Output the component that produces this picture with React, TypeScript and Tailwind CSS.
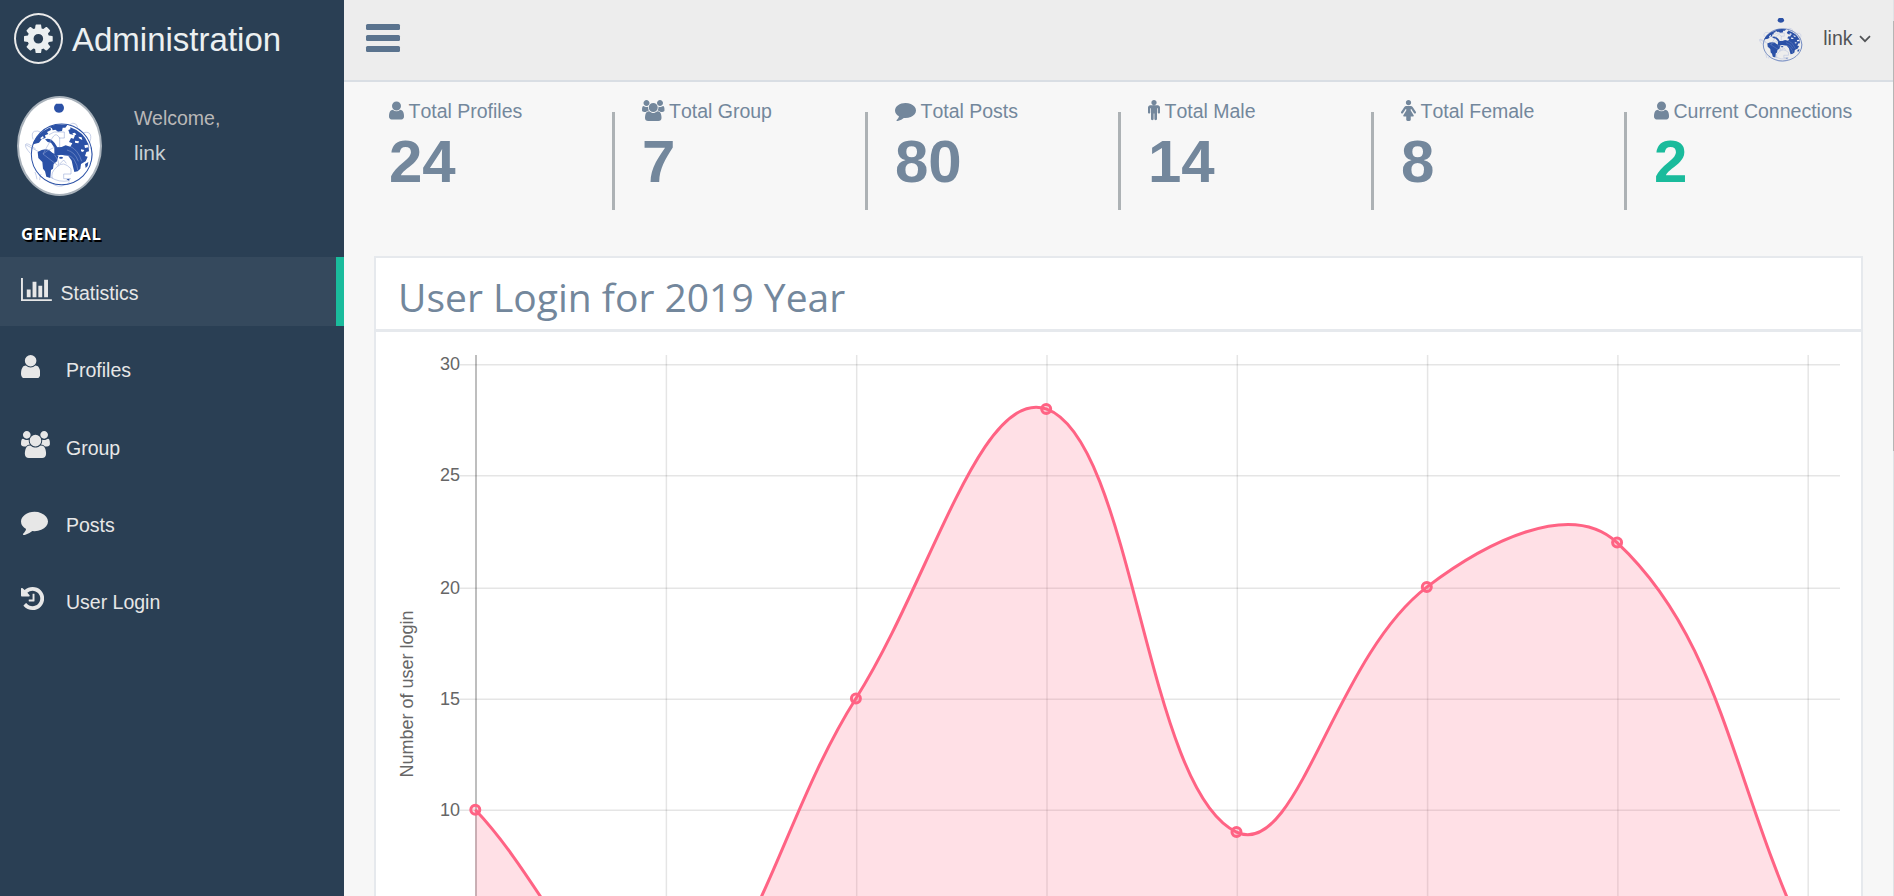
import type { ReactNode } from "react";

type IconDef = { box: [number, number]; d: string };

const ICONS = {
  user: {
    box: [0, 1280],
    d: "M1280 1399q0 109-62.5 187t-150.5 78h-854q-88 0-150.5-78t-62.5-187q0-85 8.5-160.5t31.5-152 58.5-131 94-89 134.5-34.5q131 128 313 128t313-128q76 0 134.5 34.5t94 89 58.5 131 31.5 152 8.5 160.5zm-256-887q0 159-112.5 271.5t-271.5 112.5-271.5-112.5-112.5-271.5 112.5-271.5 271.5-112.5 271.5 112.5 112.5 271.5z",
  },
  users: {
    box: [0, 1920],
    d: "M593 896q-162 5-265 128h-134q-82 0-138-40.5t-56-118.5q0-353 124-353 6 0 43.5 21t97.5 42.5 119 21.5q67 0 133-23-5 37-5 66 0 139 81 256zm1071 637q0 120-73 189.5t-194 69.5h-874q-121 0-194-69.5t-73-189.5q0-53 3.5-103.5t14-109 26.5-108.5 43-97.5 62-81 85.5-53.5 111.5-20q10 0 43 21.5t73 48 107 48 135 21.5 135-21.5 107-48 73-48 43-21.5q61 0 111.5 20t85.5 53.5 62 81 43 97.5 26.5 108.5 14 109 3.5 103.5zm-1024-1277q0 106-75 181t-181 75-181-75-75-181 75-181 181-75 181 75 75 181zm704 384q0 159-112.5 271.5t-271.5 112.5-271.5-112.5-112.5-271.5 112.5-271.5 271.5-112.5 271.5 112.5 112.5 271.5zm576 225q0 78-56 118.5t-138 40.5h-134q-103-123-265-128 81-117 81-256 0-29-5-66 66 23 133 23 59 0 119-21.5t97.5-42.5 43.5-21q124 0 124 353zm-128-609q0 106-75 181t-181 75-181-75-75-181 75-181 181-75 181 75 75 181z",
  },
  comment: {
    box: [0, 1792],
    d: "M1792 896q0 174-120 321.5t-326 233-450 85.5q-70 0-145-8-198 175-460 242-49 14-114 22-17 2-30.5-9t-17.5-29v-1q-3-4-.5-12t2-10 4.5-9.5l6-9 7-8.5 8-9q7-8 31-34.5t34.5-38 31-39.5 32.5-51 27-59 26-76q-157-89-247.5-220t-90.5-281q0-130 71-248.5t191-204.5 286-136.5 348-50.5q244 0 450 85.5t326 233 120 321.5z",
  },
  history: {
    box: [128, 1536],
    d: "M1664 896q0 156-61 298t-164 245-245 164-298 61q-172 0-327-72.5t-264-204.5q-7-10-6.5-22.5t8.5-20.5l137-138q10-9 25-9 16 2 23 12 73 95 179 147t225 52q104 0 198.5-40.5t163.5-109.5 109.5-163.5 40.5-198.5-40.5-198.5-109.5-163.5-163.5-109.5-198.5-40.5q-98 0-188 35.5t-160 101.5l137 138q31 30 14 69-17 40-59 40h-448q-26 0-45-19t-19-45v-448q0-42 40-59 39-17 69 14l130 129q107-101 244.5-156.5t284.5-55.5q156 0 298 61t245 164 164 245 61 298zm-640-288v448q0 14-9 23t-23 9h-320q-14 0-23-9t-9-23v-64q0-14 9-23t23-9h224v-352q0-14 9-23t23-9h64q14 0 23 9t9 23z",
  },
  barChart: {
    box: [0, 2048],
    d: "M640 896v512h-256v-512h256zm384-512v1024h-256v-1024h256zm1024 1152v128h-2048v-1536h128v1408h1920zm-640-896v768h-256v-768h256zm384-384v1152h-256v-1152h256z",
  },
  male: {
    box: [384, 1024],
    d: "M1408 640v416q0 40-28 68t-68 28-68-28-28-68v-352h-64v912q0 46-33 79t-79 33-79-33-33-79v-464h-64v464q0 46-33 79t-79 33-79-33-33-79v-912h-64v352q0 40-28 68t-68 28-68-28-28-68v-416q0-80 56-136t136-56h640q80 0 136 56t56 136zm-288-416q0 93-65.5 158.5t-158.5 65.5-158.5-65.5-65.5-158.5 65.5-158.5 158.5-65.5 158.5 65.5 65.5 158.5z",
  },
  female: {
    box: [256, 1280],
    d: "M1536 1056q0 40-28 68t-68 28q-51 0-80-43l-227-341h-45v132l247 411q9 15 9 33 0 26-19 45t-45 19h-192v272q0 46-33 79t-79 33h-160q-46 0-79-33t-33-79v-272h-192q-26 0-45-19t-19-45q0-18 9-33l247-411v-132h-45l-227 341q-29 43-80 43-40 0-68-28t-28-68q0-29 16-53l256-384q73-107 176-107h384q103 0 176 107l256 384q16 24 16 53zm-416-832q0 93-65.5 158.5t-158.5 65.5-158.5-65.5-65.5-158.5 65.5-158.5 158.5-65.5 158.5 65.5 65.5 158.5z",
  },
  cog: {
    box: [128, 1536],
    d: "M1152 896q0-106-75-181t-181-75-181 75-75 181 75 181 181 75 181-75 75-181zm512-109v222q0 12-8 23t-20 13l-185 28q-19 54-39 91 35 50 107 138 10 12 10 25t-9 23q-27 37-99 108t-94 71q-12 0-26-9l-138-108q-44 23-91 38-16 136-29 186-7 28-36 28h-222q-14 0-24.5-8.5t-11.5-21.5l-28-184q-49-16-90-37l-141 107q-10 9-25 9-14 0-25-11-126-114-165-168-7-10-7-23 0-12 8-23 15-21 51-66.5t54-70.5q-27-50-41-99l-183-27q-13-2-21-12.5t-8-23.5v-222q0-12 8-23t19-13l186-28q14-46 39-92-40-57-107-138-10-12-10-24 0-10 9-23 26-36 98.5-107.5t94.5-71.5q13 0 26 10l138 107q44-23 91-38 16-136 29-186 7-28 36-28h222q14 0 24.5 8.5t11.5 21.5l28 184q49 16 90 37l142-107q9-9 24-9 13 0 25 10 129 119 165 170 7 8 7 22 0 12-8 23-15 21-51 66.5t-54 70.5q26 50 41 98l183 28q13 2 21 12.5t8 23.5z",
  },
} satisfies Record<string, IconDef>;

type IconName = keyof typeof ICONS;

function Icon({ name, className }: { name: IconName; className: string }) {
  const { box, d } = ICONS[name];
  return (
    <svg viewBox={`${box[0]} 0 ${box[1]} 1792`} className={`w-auto shrink-0 fill-current ${className}`}>
      <path d={d} />
    </svg>
  );
}

function Globe({ className }: { className: string }) {
  return (
    <svg viewBox="40 30 222 260" preserveAspectRatio="none" className={className}>
      <path d="M139 41h18q6 6 6 13t-6 12q-9 5-18 0-6-5-6-12t6-13z" fill="#2b51a6" />
      <g fill="none" stroke="#a9b7dc" strokeWidth="2">
        <path d="M70 148q-6-20 4-24t22 4M180 104q10-8 18-2t4 16M222 128q16-4 20 6t-4 26M62 190q-18-20-14-27t30 14M76 246q4 10 6 22M94 252q-4 10-4 18M120 274q18 18 36 14t24-12" />
        <path d="M48 164l52 28M240 170q14 20 4 46" />
      </g>
      <circle cx="156" cy="193" r="91" fill="none" stroke="#2b51a6" strokeWidth="3" />
      <g fill="#2b51a6">
        <path d="M68 164q10-26 34-42l20-10 2 8-12 6 4 6-10 4 2 8-12 4-8 10-14 4z" />
        <path d="M119 110q22-10 54-5l-6 8-8 0-2 10-12 2-8-6-8 2-2-6z" />
        <path d="M182 112q40 14 54 50l2 22-8 2-4 12 8 2-6 14-14 8-2 14-8 8-10 2-4-16-4-18-10-14-22-4-20 4v-24l20-2 14-6 14 4 6-10-10-4 6-12 8 2 4-10-16-4-4-12 6-2z" />
        <path d="M84 186q18-12 34-6l10 8 18 10-4 16-10 8-2 14-6 4-2 24-12-4-4-16-6-8-2-20-12-12z" />
        <path d="M106 148q20-8 36 22l4 8-10-2-12-18-10-2zM136 172h36v22h-36z" />
        <path d="M148 202q6-4 12 0l-2 4h-8zM226 222l10-6-2 12-6 6zM170 268l10-2-2 6z" />
      </g>
      <g fill="#ffffff">
        <path d="M188 130l8-2 4 6-8 2zM206 140l10 2 2 8-8-4zM196 152l12 2-2 6-10-2zM224 166l10-2 2 8-10 2zM214 178l10 2-4 6-6-2zM92 144l8-6 2 6-8 4z" />
      </g>
      <g fill="none" stroke="#8fa3d4" strokeWidth="1.6">
        <path d="M100 192q24-44 32-54t18 6v28M134 172q-24 10-34 20l44 34M134 194q16 20 12 32M148 126h16v18h-16M118 134q16-12 30-8M164 196q20-2 30 14t10 30M172 180q24 6 34 34M180 168q26 12 36 46M140 232q12-12 22-10t22 14v16h-22v14h22M140 232q-18 16-12 34M150 222l12-12 8 10M124 262q22 16 56 10" />
      </g>
    </svg>
  );
}

const NAV: { icon: IconName; label: string; active?: boolean }[] = [
  { icon: "barChart", label: "Statistics", active: true },
  { icon: "user", label: "Profiles" },
  { icon: "users", label: "Group" },
  { icon: "comment", label: "Posts" },
  { icon: "history", label: "User Login" },
];

function Sidebar() {
  return (
    <aside className="flex w-[344px] shrink-0 flex-col bg-[#2a3f54]">
      <div className="flex h-[82px] items-start pl-3.5 pt-[13px] text-[#ecf0f1]">
        <span className="flex h-[51px] w-[49px] items-center justify-center rounded-[50%] border-2 border-[#eaeaea]">
          <Icon name="cog" className="h-[33.5px]" />
        </span>
        <span className="ml-[9px] mt-2 text-[33px] leading-[38px]">Administration</span>
      </div>
      <div className="flex pl-[17px] pt-3.5">
        <div className="h-[100px] w-[85px] rounded-[50%] border-2 border-[#a9b2bb] bg-white pb-[7.3px] pl-[4.3px] pr-[2.7px] pt-[2px]">
          <Globe className="h-full w-full" />
        </div>
        <div className="ml-8 pt-[11px]">
          <div className="text-[19.5px] leading-[23px] text-[#bab8b8]">Welcome,</div>
          <div className="mt-[11px] text-[21px] leading-6 text-[#c8d0d5]">link</div>
        </div>
      </div>
      <h3 className="mt-[26px] h-[35px] pl-[21px] font-['Open_Sans'] text-[16.5px] font-bold leading-6 tracking-[0.75px] text-white [text-shadow:1.5px_1.5px_#000]">
        GENERAL
      </h3>
      <ul>
        {NAV.map((item) => (
          <li key={item.label} className="h-[77.3px]">
            <a
              className={
                item.active
                  ? "flex h-[69px] items-start border-r-8 border-[#1abb9c] bg-[#35495d] pl-[21px] text-[#e7e7e7]"
                  : "flex h-[69px] items-start pl-[21px] text-[#e7e7e7]"
              }
            >
              <span className={item.active ? "mt-[19px] w-[39.5px]" : "mt-[19px] w-[45px]"}>
                <Icon name={item.icon} className="h-[27px]" />
              </span>
              <span className="mt-[25px] text-[19.5px] leading-[22px]">{item.label}</span>
            </a>
          </li>
        ))}
      </ul>
    </aside>
  );
}

function TopBar() {
  return (
    <header className="flex h-[82px] items-start justify-between border-b-2 border-[#d9dee4] bg-[#ededed] pl-[22px] pr-[22.5px]">
      <div className="mt-6 flex w-[34px] flex-col gap-[5px]">
        <span className="h-1.5 rounded-[1.5px] bg-[#5a738e]" />
        <span className="h-1.5 rounded-[1.5px] bg-[#5a738e]" />
        <span className="h-1.5 rounded-[1.5px] bg-[#5a738e]" />
      </div>
      <div className="flex items-start text-[#515356]">
        <Globe className="mt-4 h-[46px] w-[47px]" />
        <span className="ml-[18px] mt-[27px] text-[19.5px] leading-[22px]">link</span>
        <svg viewBox="0 0 12 8" className="ml-[6px] mt-[34.5px] h-2 w-3">
          <path d="M1 1.2L6 6.2L11 1.2" fill="none" stroke="currentColor" strokeWidth="1.7" />
        </svg>
      </div>
    </header>
  );
}

const STATS: { icon: IconName; label: string; value: string; accent?: boolean }[] = [
  { icon: "user", label: "Total Profiles", value: "24" },
  { icon: "users", label: "Total Group", value: "7" },
  { icon: "comment", label: "Total Posts", value: "80" },
  { icon: "male", label: "Total Male", value: "14" },
  { icon: "female", label: "Total Female", value: "8" },
  { icon: "user", label: "Current Connections", value: "2", accent: true },
];

function StatTiles() {
  return (
    <section className="flex h-[174px] pl-[15px] pt-[18px]">
      {STATS.map((s, i) => (
        <div key={s.label} className="flex w-[253px] items-start">
          <div className={i === 0 ? "mt-3 h-[98px] w-[3px]" : "mt-3 h-[98px] w-[3px] bg-[#adb2b5]"} />
          <div className="pl-[27px]">
            <div className="flex h-[25px] items-start whitespace-nowrap">
              <Icon name={s.icon} className="h-[21px]" />
              <span className="ml-[4.5px] text-[19.5px] leading-[22px] [font-kerning:none]">{s.label}</span>
            </div>
            <div
              className={
                s.accent
                  ? "mt-[2px] text-[60px] font-bold leading-[70px] text-[#1abb9c]"
                  : "mt-[2px] text-[60px] font-bold leading-[70px]"
              }
            >
              {s.value}
            </div>
          </div>
        </div>
      ))}
    </section>
  );
}

const LOGINS = [10, 1, 15, 28, 9, 20, 22, 4];
const X0 = 99.3;
const STEP_X = 190.3;
const Y0 = 700.5;
const UNIT_Y = 22.27;
const TENSION = 0.4;

type Pt = { x: number; y: number };
const POINTS: Pt[] = LOGINS.map((v, i) => ({ x: X0 + i * STEP_X, y: Y0 - v * UNIT_Y }));

function controls(i: number): [Pt, Pt] {
  const p = POINTS[i];
  const a = POINTS[i - 1] ?? p;
  const b = POINTS[i + 1] ?? p;
  const d0 = Math.hypot(p.x - a.x, p.y - a.y);
  const d1 = Math.hypot(b.x - p.x, b.y - p.y);
  const f0 = (TENSION * d0) / (d0 + d1);
  const f1 = (TENSION * d1) / (d0 + d1);
  return [
    { x: p.x - f0 * (b.x - a.x), y: p.y - f0 * (b.y - a.y) },
    { x: p.x + f1 * (b.x - a.x), y: p.y + f1 * (b.y - a.y) },
  ];
}

const CURVE = POINTS.map((p, i) => {
  if (i === 0) return `M${p.x} ${p.y}`;
  const c1 = controls(i - 1)[1];
  const c2 = controls(i)[0];
  return `C${c1.x} ${c1.y} ${c2.x} ${c2.y} ${p.x} ${p.y}`;
}).join("");

const TICKS = [
  { label: "30", y: 32.75 },
  { label: "25", y: 143.75 },
  { label: "20", y: 256.25 },
  { label: "15", y: 367.25 },
  { label: "10", y: 478.25 },
];

function LoginChart() {
  return (
    <svg viewBox="0 0 1485 564" className="block h-[564px] w-[1485px]">
      <g stroke="#000000" strokeOpacity="0.1" strokeWidth="1.5">
        {TICKS.map((t) => (
          <line key={t.label} x1="84" x2="1464" y1={t.y} y2={t.y} />
        ))}
        {POINTS.slice(1).map((p) => (
          <line key={p.x} x1={p.x + 0.8} x2={p.x + 0.8} y1="23" y2="564" />
        ))}
      </g>
      <line x1="100" x2="100" y1="23" y2="564" stroke="#000000" strokeOpacity="0.3" strokeWidth="1.7" />
      <path
        d={`${CURVE}L${POINTS[7].x} ${Y0}L${X0} ${Y0}Z`}
        fill="rgb(255,99,132)"
        fillOpacity="0.2"
      />
      <path d={CURVE} fill="none" stroke="rgb(255,99,132)" strokeWidth="3" />
      {POINTS.map((p) => (
        <circle
          key={p.x}
          cx={p.x}
          cy={p.y}
          r="4.5"
          fill="rgb(255,99,132)"
          fillOpacity="0.2"
          stroke="rgb(255,99,132)"
          strokeWidth="3"
        />
      ))}
      <g fill="#666666" fontSize="18">
        {TICKS.map((t) => (
          <text key={t.label} x="84" y={t.y + 5.25} textAnchor="end">
            {t.label}
          </text>
        ))}
        <text transform="translate(37 362) rotate(-90)" textAnchor="middle">
          Number of user login
        </text>
      </g>
    </svg>
  );
}

function Panel({ title, children }: { title: string; children: ReactNode }) {
  return (
    <section className="ml-[30px] w-[1489px] border-2 border-b-0 border-[#e6e9ed] bg-white">
      <h2 className="h-[74px] border-b-3 border-[#e6e9ed] pl-[22px] pt-[12px] font-['Open_Sans'] text-[39px] leading-[53px]">
        {title}
      </h2>
      {children}
    </section>
  );
}

export default function App() {
  return (
    <div className="flex h-[896px] w-[1894px] overflow-hidden bg-[#f7f7f7] font-['Liberation_Sans',Arial,sans-serif] text-[#73879c]">
      <Sidebar />
      <main className="flex w-[1549px] shrink-0 flex-col">
        <TopBar />
        <StatTiles />
        <Panel title="User Login for 2019 Year">
          <LoginChart />
        </Panel>
      </main>
      <div className="w-px shrink-0 bg-[#e0e3e6]">
        <div className="mt-[21px] h-[430px] bg-[#b5b5b5]" />
      </div>
    </div>
  );
}
